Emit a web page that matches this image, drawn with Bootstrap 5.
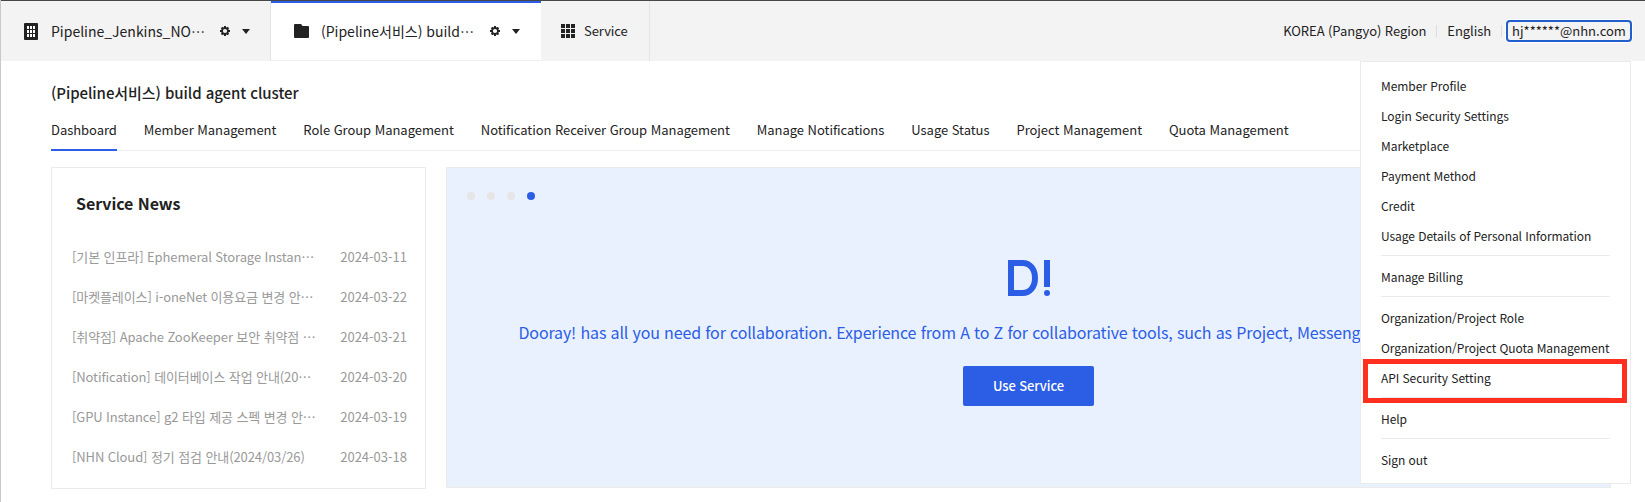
<!DOCTYPE html>
<html lang="ko">
<head>
<meta charset="utf-8">
<meta name="viewport" content="width=device-width, initial-scale=1">
<title>Console</title>
<link rel="stylesheet" href="https://cdn.jsdelivr.net/npm/bootstrap@5.3.0/dist/css/bootstrap.min.css">
<style>
body{font-family:"Noto Sans CJK KR",sans-serif;font-size:13px;letter-spacing:-.07px;line-height:20px;color:#222;background:#fff;height:502px;overflow:hidden;border-left:1px solid #c8c8c8}
.topbar{height:61px;background:#f3f3f3;border-top:1px solid #47474a;margin-left:-1px;border-left:1px solid #2c5de5}
.tab-item{height:60px;padding-left:23px;white-space:nowrap}
.tab-project{width:270px;border-right:1px solid #e5e5e5}
.tab-org{width:270px;background:#fff;border-top:2px solid #2c5de5;border-bottom:1px solid #eee;padding-bottom:1px}
.tab-service{width:109px;border-right:1px solid #e5e5e5;padding-left:20px}
.tab-label{font-size:14px;letter-spacing:0}
.user-area{padding-right:13px}
.sep{width:1px;height:12px;background:#ddd}
.account{border:2px solid #205fcd;border-radius:4px;height:22px;width:126px;line-height:18px;letter-spacing:0;box-shadow:0 0 0 1px #fff}
.page{padding:20px 34px 0 50px}
.page h1{font-size:15px;line-height:24px;font-weight:500}
.subnav{height:48px;gap:27px;border-bottom:1px solid #eee;margin-top:-2px;letter-spacing:-.045px}
.subnav .nav-link{padding:17px 0 0;color:#222;height:48px;white-space:nowrap}
.subnav .nav-link.active{border-bottom:2px solid #2c5de5}
.news{width:375px;height:322px;border:1px solid #ebebeb;padding:22px 18px 0 20px}
.news h2{font-size:16px;line-height:26px;font-weight:700;margin-left:4px}
.news li{height:40px;color:#999;white-space:nowrap;letter-spacing:-.1px}
.news .news-date{letter-spacing:0}
.banner{height:321px;background:#e9f1ff;border:1px solid #ebebeb;color:#2c5de5;padding:24px 0 0 20px}
.dot{width:8px;height:8px;border-radius:50%;background:#e5e5e5}
.dot.on{background:#2c5de5}
.banner-text{font-size:16px;letter-spacing:-.15px;line-height:26px;width:1020px;white-space:nowrap}
.btn-use,.btn-use:hover{width:131px;height:40px;border-radius:2px;background:#2c5de5;color:#fff;font-size:13px;letter-spacing:-.1px;font-weight:500;padding:0}
.account-menu{top:61px;right:14px;width:271px;height:423px;background:#fff;border:1px solid #ebebeb;padding:9px 20px 0;font-size:12px;letter-spacing:-.06px}
.account-menu a{display:block;height:30px;line-height:30px;color:#222;text-decoration:none;white-space:nowrap}
.account-menu hr{margin:4px 0 6px;opacity:1;border-top:1px solid #ebebeb}
.marker{left:2px;top:297px;width:264px;height:44px;border:5px solid #ff3020}
</style>
</head>
<body class="position-relative">
<svg class="d-none">
  <symbol id="gear" viewBox="0 0 10 10"><path fill-rule="evenodd" d="M4 0h2v1.200l.8.3.9-.8 1.500 1.500-.8.9.3.9H10v2H8.700l-.3.9.8.9-1.500 1.500-.9-.8-.8.3V10H4V8.800l-.8-.3-.9.8L.8 7.800l.8-.9L1.300 6H0V4h1.300l.3-.9-.8-.9L2.300.7l.9.8.8-.3zM5 2.900a2.100 2.100 0 1 0 0 4.200 2.100 2.100 0 0 0 0-4.200z"/></symbol>
</svg>
<header class="topbar d-flex">
  <div class="tab-item tab-project d-flex align-items-center">
    <svg width="14" height="17" viewBox="0 0 14 17"><rect width="14" height="17" rx="1" fill="#222"/><path fill="#fff" d="M3 3h2v3H3zm3 0h2v3H6zm3 0h2v3H9zM3 7h2v3H3zm3 0h2v3H6zm3 0h2v3H9zM3 11h2v3H3zm3 0h2v3H6zm3 0h2v3H9z"/></svg>
    <span class="tab-label" style="margin-left:13px;width:169px">Pipeline_Jenkins_NO…</span>
    <svg width="10" height="10" fill="#222"><use href="#gear"/></svg>
    <svg class="ms-auto" style="margin-right:20px" width="8" height="5"><path d="M0 0h8L4 5z" fill="#222"/></svg>
  </div>
  <div class="tab-item tab-org d-flex align-items-center">
    <svg width="15" height="14" viewBox="0 0 15 14"><path d="M1 0h6l1.500 2H14a1 1 0 0 1 1 1v10a1 1 0 0 1-1 1H1a1 1 0 0 1-1-1V1a1 1 0 0 1 1-1z" fill="#222"/></svg>
    <span class="tab-label" style="margin-left:12px;width:169px">(Pipeline서비스) build…</span>
    <svg width="10" height="10" fill="#222"><use href="#gear"/></svg>
    <svg class="ms-auto" style="margin-right:21px" width="8" height="5"><path d="M0 0h8L4 5z" fill="#222"/></svg>
  </div>
  <div class="tab-item tab-service d-flex align-items-center">
    <svg width="14" height="14" fill="#222"><path d="M0 0h4v4H0zM5 0h4v4H5zM10 0h4v4h-4zM0 5h4v4H0zM5 5h4v4H5zM10 5h4v4h-4zM0 10h4v4H0zM5 10h4v4H5zM10 10h4v4h-4z"/></svg>
    <span style="margin-left:9px">Service</span>
  </div>
  <div class="user-area d-flex align-items-center ms-auto">
    <span>KOREA (Pangyo) Region</span><span class="sep" style="margin:0 10px"></span>
    <span>English</span><span class="sep" style="margin:0 4px 0 10px"></span>
    <span class="account text-center">hj******@nhn.com</span>
  </div>
</header>
<main class="page">
  <h1 class="mb-0">(Pipeline서비스) build agent cluster</h1>
  <nav class="subnav nav flex-nowrap">
    <a class="nav-link active" href="#">Dashboard</a><a class="nav-link" href="#">Member Management</a><a class="nav-link" href="#">Role Group Management</a><a class="nav-link" href="#">Notification Receiver Group Management</a><a class="nav-link" href="#">Manage Notifications</a><a class="nav-link" href="#">Usage Status</a><a class="nav-link" href="#">Project Management</a><a class="nav-link" href="#">Quota Management</a>
  </nav>
  <div class="d-flex mt-3" style="gap:20px">
    <section class="news flex-shrink-0">
      <h2>Service News</h2>
      <ul class="list-unstyled mb-0" style="padding-top:13px">
        <li class="d-flex align-items-center justify-content-between"><span>[기본 인프라] Ephemeral Storage Instan…</span><span class="news-date">2024-03-11</span></li>
        <li class="d-flex align-items-center justify-content-between"><span>[마켓플레이스] i-oneNet 이용요금 변경 안…</span><span class="news-date">2024-03-22</span></li>
        <li class="d-flex align-items-center justify-content-between"><span>[취약점] Apache ZooKeeper 보안 취약점 …</span><span class="news-date">2024-03-21</span></li>
        <li class="d-flex align-items-center justify-content-between"><span>[Notification] 데이터베이스 작업 안내(20…</span><span class="news-date">2024-03-20</span></li>
        <li class="d-flex align-items-center justify-content-between"><span>[GPU Instance] g2 타입 제공 스펙 변경 안…</span><span class="news-date">2024-03-19</span></li>
        <li class="d-flex align-items-center justify-content-between"><span>[NHN Cloud] 정기 점검 안내(2024/03/26)</span><span class="news-date">2024-03-18</span></li>
      </ul>
    </section>
    <section class="banner flex-grow-1">
      <div class="d-flex" style="gap:12px"><i class="dot"></i><i class="dot"></i><i class="dot"></i><i class="dot on"></i></div>
      <div class="d-flex flex-column align-items-center" style="margin:60px 20px 0 0">
        <svg width="42" height="36" fill="none" stroke="#2c5de5" stroke-width="6"><path d="M3 3h11.500C22 3 27 9 27 18s-5 15-12.500 15H3z"/><path d="M39 0v27"/><circle cx="39" cy="33" r="3" fill="#2c5de5" stroke="none"/></svg>
        <div class="banner-text" style="margin-top:23px">Dooray! has all you need for collaboration. Experience from A to Z for collaborative tools, such as Project, Messenger, Mail, Drive, Wiki.</div>
        <button class="btn btn-use" style="margin-top:21px">Use Service</button>
      </div>
    </section>
  </div>
</main>
<div class="account-menu position-absolute">
  <a href="#">Member Profile</a><a href="#">Login Security Settings</a><a href="#">Marketplace</a><a href="#">Payment Method</a><a href="#">Credit</a><a href="#">Usage Details of Personal Information</a>
  <hr><a href="#">Manage Billing</a>
  <hr><a href="#">Organization/Project Role</a><a href="#">Organization/Project Quota Management</a><a href="#">API Security Setting</a>
  <hr><a href="#">Help</a>
  <hr><a href="#">Sign out</a>
  <div class="marker position-absolute"></div>
</div>
<script src="https://cdn.jsdelivr.net/npm/bootstrap@5.3.0/dist/js/bootstrap.bundle.min.js"></script>
</body>
</html>
